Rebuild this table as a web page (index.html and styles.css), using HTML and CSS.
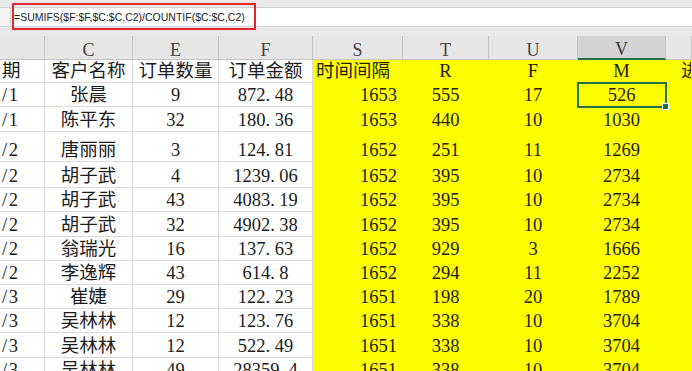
FILE: index.html
```html
<!DOCTYPE html>
<html lang="zh">
<head>
<meta charset="utf-8">
<title>Sheet</title>
<link rel="stylesheet" href="styles.css">
</head>
<body>
<div class="top">
  <div class="fbar">
    <div class="fleft"></div>
    <div class="ftext">=SUMIFS($F:$F,$C:$C,C2)/COUNTIF($C:$C,C2)</div>
  </div>
  <div class="mark"></div>
</div>
<div class="sheet">
  <div class="row hdr">
    <div class="c"></div><div class="c">C</div><div class="c">E</div><div class="c">F</div><div class="c">S</div><div class="c">T</div><div class="c">U</div><div class="c sel">V</div><div class="c"></div>
  </div>
  <div class="row h23">
    <div class="c a">期</div><div class="c">客户名称</div><div class="c">订单数量</div><div class="c">订单金额</div><div class="c y l">时间间隔</div><div class="c y">R</div><div class="c y">F</div><div class="c y">M</div><div class="c y x">进</div>
  </div>
  <div class="row h24">
    <div class="c a">/1</div><div class="c">张晨</div><div class="c">9</div><div class="c">872<span class="d">.</span>48</div><div class="c y r">1653</div><div class="c y">555</div><div class="c y">17</div><div class="c y cur">526</div><div class="c y"></div>
  </div>
  <div class="row h25">
    <div class="c a">/1</div><div class="c">陈平东</div><div class="c">32</div><div class="c">180<span class="d">.</span>36</div><div class="c y r">1653</div><div class="c y">440</div><div class="c y">10</div><div class="c y">1030</div><div class="c y"></div>
  </div>
  <div class="row h30">
    <div class="c a">/2</div><div class="c">唐丽丽</div><div class="c">3</div><div class="c">124<span class="d">.</span>81</div><div class="c y r">1652</div><div class="c y">251</div><div class="c y">11</div><div class="c y">1269</div><div class="c y"></div>
  </div>
  <div class="row h26">
    <div class="c a">/2</div><div class="c">胡子武</div><div class="c">4</div><div class="c">1239<span class="d">.</span>06</div><div class="c y r">1652</div><div class="c y">395</div><div class="c y">10</div><div class="c y">2734</div><div class="c y"></div>
  </div>
  <div class="row h24">
    <div class="c a">/2</div><div class="c">胡子武</div><div class="c">43</div><div class="c">4083<span class="d">.</span>19</div><div class="c y r">1652</div><div class="c y">395</div><div class="c y">10</div><div class="c y">2734</div><div class="c y"></div>
  </div>
  <div class="row h25">
    <div class="c a">/2</div><div class="c">胡子武</div><div class="c">32</div><div class="c">4902<span class="d">.</span>38</div><div class="c y r">1652</div><div class="c y">395</div><div class="c y">10</div><div class="c y">2734</div><div class="c y"></div>
  </div>
  <div class="row h24">
    <div class="c a">/2</div><div class="c">翁瑞光</div><div class="c">16</div><div class="c">137<span class="d">.</span>63</div><div class="c y r">1652</div><div class="c y">929</div><div class="c y">3</div><div class="c y">1666</div><div class="c y"></div>
  </div>
  <div class="row h24">
    <div class="c a">/2</div><div class="c">李逸辉</div><div class="c">43</div><div class="c">614<span class="d">.</span>8</div><div class="c y r">1652</div><div class="c y">294</div><div class="c y">11</div><div class="c y">2252</div><div class="c y"></div>
  </div>
  <div class="row h24">
    <div class="c a">/3</div><div class="c">崔婕</div><div class="c">29</div><div class="c">122<span class="d">.</span>23</div><div class="c y r">1651</div><div class="c y">198</div><div class="c y">20</div><div class="c y">1789</div><div class="c y"></div>
  </div>
  <div class="row h24">
    <div class="c a">/3</div><div class="c">吴林林</div><div class="c">12</div><div class="c">123<span class="d">.</span>76</div><div class="c y r">1651</div><div class="c y">338</div><div class="c y">10</div><div class="c y">3704</div><div class="c y"></div>
  </div>
  <div class="row h25">
    <div class="c a">/3</div><div class="c">吴林林</div><div class="c">12</div><div class="c">522<span class="d">.</span>49</div><div class="c y r">1651</div><div class="c y">338</div><div class="c y">10</div><div class="c y">3704</div><div class="c y"></div>
  </div>
  <div class="row h24">
    <div class="c a">/3</div><div class="c">吴林林</div><div class="c">49</div><div class="c">28359<span class="d">.</span>4</div><div class="c y r">1651</div><div class="c y">338</div><div class="c y">10</div><div class="c y">3704</div><div class="c y"></div>
  </div>
</div>
</body>
</html>
```

FILE: styles.css
```css
html, body {
  margin: 0;
  padding: 0;
}
body {
  width: 692px;
  height: 371px;
  overflow: hidden;
  background: #ffffff;
}
.top {
  position: relative;
  height: 36px;
  box-sizing: border-box;
  padding-top: 7px;
  background: #e9e9e9;
}
.fbar {
  display: flex;
  height: 20px;
  box-sizing: border-box;
  background: #ffffff;
  border-top: 1px solid #d2d2d2;
  border-bottom: 1px solid #d2d2d2;
}
.fleft {
  width: 10px;
  flex: none;
  background: #f4f4f4;
  border-right: 1px solid #d2d2d2;
}
.ftext {
  padding-left: 3px;
  font-family: "Liberation Sans", Arial, sans-serif;
  font-size: 10.5px;
  line-height: 18px;
  color: #222222;
  white-space: nowrap;
}
.mark {
  position: absolute;
  left: 12px;
  top: 3px;
  width: 244px;
  height: 27px;
  box-sizing: border-box;
  border: 2px solid #e3262b;
}
.sheet {
  font-family: "Liberation Serif", "Noto Sans CJK SC", serif;
  font-size: 18.5px;
  color: #1c1c1c;
}
.row {
  display: grid;
  grid-template-columns: 45px 88px 86px 94px 90px 86px 89px 88px 26px;
}
.c {
  box-sizing: border-box;
  border-right: 1px solid #dadada;
  border-bottom: 1px solid #dadada;
  display: flex;
  align-items: flex-end;
  justify-content: center;
  overflow: hidden;
  white-space: nowrap;
  line-height: 20px;
  padding-bottom: 1px;
}
.h23 { height: 23px; }
.h24 { height: 24px; }
.h25 { height: 25px; }
.h26 { height: 26px; }
.h30 { height: 30px; }
.hdr {
  height: 24px;
  background: #e6e6e6;
}
.hdr .c {
  border-color: #c4c4c4;
  align-items: center;
  padding-bottom: 0;
  padding-top: 4px;
  color: #444444;
  font-size: 18px;
}
.hdr .sel {
  background: #d3d3d3;
  border-bottom: 2px solid #217346;
  color: #3a3a3a;
}
.a {
  justify-content: flex-start;
  padding-left: 2px;
  letter-spacing: 1.5px;
}
.y {
  background: #ffff00;
  border-color: transparent;
  color: #222200;
}
.l {
  justify-content: flex-start;
  padding-left: 3px;
}
.r {
  justify-content: flex-end;
  padding-right: 5px;
}
.x {
  justify-content: flex-start;
  padding-left: 15px;
}
.d {
  margin-right: 4.6px;
}
.cur {
  position: relative;
  z-index: 1;
  overflow: visible;
  outline: 2px solid #217346;
  outline-offset: -1px;
}
.cur::after {
  content: "";
  position: absolute;
  right: -4px;
  bottom: -4px;
  width: 5px;
  height: 5px;
  background: #217346;
  border: 1px solid #ffffff;
}
```
